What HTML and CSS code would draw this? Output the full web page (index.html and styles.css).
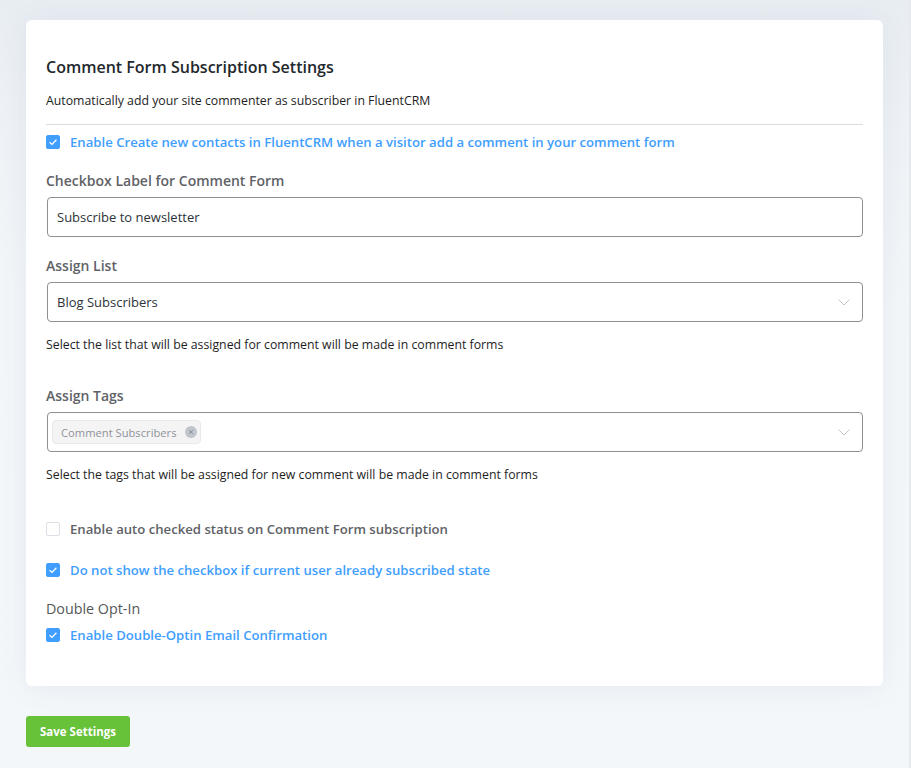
FILE: index.html
```html
<!DOCTYPE html>
<html>
<head>
<meta charset="utf-8">
<link rel="stylesheet" href="styles.css">
</head>
<body>
<div class="page">
  <div class="card">
    <h2 class="title">Comment Form Subscription Settings</h2>
    <p class="subtitle">Automatically add your site commenter as subscriber in FluentCRM</p>
    <hr class="divider">
    <label class="check checked first">
      <span class="box"><svg viewBox="0 0 14 14" width="14" height="14"><path d="M3.6 7.2 L6 9.4 L10.4 4.8" fill="none" stroke="#fff" stroke-width="1.3"/></svg></span>
      <span class="check-text">Enable Create new contacts in FluentCRM when a visitor add a comment in your comment form</span>
    </label>

    <div class="group">
      <div class="label">Checkbox Label for Comment Form</div>
      <div class="input">Subscribe to newsletter</div>
    </div>

    <div class="group">
      <div class="label">Assign List</div>
      <div class="input select">Blog Subscribers
        <svg class="chev" viewBox="0 0 12 7" width="12" height="7"><path d="M0.5 0.5 L6 6 L11.5 0.5" fill="none" stroke="#c0c4cc" stroke-width="1"/></svg>
      </div>
      <p class="help">Select the list that will be assigned for comment will be made in comment forms</p>
    </div>

    <div class="group tags-group">
      <div class="label">Assign Tags</div>
      <div class="input select tags">
        <span class="tag">Comment Subscribers<span class="tag-close"><svg viewBox="0 0 12 12" width="12" height="12"><circle cx="6" cy="6" r="6" fill="#c0c4cc"/><path d="M4 4 L8 8 M8 4 L4 8" stroke="#909399" stroke-width="1"/></svg></span></span>
        <svg class="chev" viewBox="0 0 12 7" width="12" height="7"><path d="M0.5 0.5 L6 6 L11.5 0.5" fill="none" stroke="#c0c4cc" stroke-width="1"/></svg>
      </div>
      <p class="help">Select the tags that will be assigned for new comment will be made in comment forms</p>
    </div>

    <label class="check auto">
      <span class="box empty"></span>
      <span class="check-text">Enable auto checked status on Comment Form subscription</span>
    </label>

    <label class="check checked hide">
      <span class="box"><svg viewBox="0 0 14 14" width="14" height="14"><path d="M3.6 7.2 L6 9.4 L10.4 4.8" fill="none" stroke="#fff" stroke-width="1.3"/></svg></span>
      <span class="check-text">Do not show the checkbox if current user already subscribed state</span>
    </label>

    <div class="label optin">Double Opt-In</div>
    <label class="check checked last">
      <span class="box"><svg viewBox="0 0 14 14" width="14" height="14"><path d="M3.6 7.2 L6 9.4 L10.4 4.8" fill="none" stroke="#fff" stroke-width="1.3"/></svg></span>
      <span class="check-text">Enable Double-Optin Email Confirmation</span>
    </label>
  </div>
  <button class="save">Save Settings</button>
</div>
</body>
</html>
```

FILE: styles.css
```css
* { box-sizing: border-box; }
html, body { margin: 0; padding: 0; }
body {
  background: #f3f6f9;
  font-family: "Open Sans", "Noto Sans", sans-serif;
  color: #1e1e1e;
  height: 768px;
  overflow: hidden;
}
.page {
  width: 911px;
  height: 768px;
  padding: 20px 26px 0 26px;
  background: linear-gradient(#e8edf2 0, #eef2f6 120px, #f3f6f9 300px, #f4f7fa 100%);
  border-right: 2px solid #e6e9ed;
}
.card {
  background: #fff;
  border-radius: 6px;
  padding: 35px 20px 41px;
  box-shadow: 0 2px 30px rgba(40, 70, 110, 0.07);
}
.title {
  margin: 0;
  font-size: 16px;
  font-weight: 600;
  line-height: 24px;
  color: #23282d;
}
.subtitle {
  margin: 12px 0 0;
  font-size: 12.3px;
  line-height: 20px;
  color: #1e1e1e;
}
.divider {
  margin: 13px 0 0;
  border: 0;
  border-top: 1px solid #dcdcde;
  height: 0;
}
.check {
  display: flex;
  align-items: center;
  height: 20px;
  font-size: 13.15px;
  font-weight: 600;
  color: #606266;
}
.check.checked { color: #409eff; }
.check.first { margin-top: 7px; }
.check.auto { margin-top: 34px; }
.check.hide { margin-top: 21px; }
.check.last { margin-top: 5px; }
.box {
  width: 14px;
  height: 14px;
  border-radius: 2px;
  background: #409eff;
  border: 1px solid #409eff;
  margin-right: 10px;
  display: flex;
  flex: none;
}
.box svg { margin: -1px; }
.box.empty {
  background: #fff;
  border-color: #dcdfe6;
}
.group { margin-top: 18px; }
.tags-group { margin-top: 30px; }
.label {
  font-size: 14px;
  font-weight: 600;
  line-height: 22px;
  color: #606266;
  margin-bottom: 5px;
}
.label.optin {
  margin-top: 18px;
  margin-bottom: 0;
  font-size: 14.3px;
  font-weight: 500;
  color: #555759;
}
.input {
  height: 40px;
  border: 1px solid #8c8f94;
  border-radius: 4px;
  padding: 0 9px;
  display: flex;
  align-items: center;
  font-size: 13px;
  color: #2c3338;
  position: relative;
  margin-left: 1px;
}
.select { justify-content: space-between; padding-right: 12px; }
.chev { flex: none; }
.tags { padding-left: 4px; }
.tag {
  display: inline-flex;
  align-items: center;
  height: 24px;
  padding: 0 3px 0 8px;
  background: #f4f4f5;
  border: 1px solid #e9e9eb;
  border-radius: 4px;
  color: #909399;
  font-size: 11.2px;
}
.tag-close { display: flex; margin-left: 8px; }
.help {
  margin: 13px 0 0;
  font-size: 12.3px;
  line-height: 20px;
  color: #1e1e1e;
}
.save {
  margin-top: 30px;
  width: 104px;
  height: 31px;
  border: 0;
  border-radius: 3px;
  background: #67c23a;
  color: #fff;
  font-family: "Open Sans", "Noto Sans", sans-serif;
  font-size: 11.5px;
  font-weight: 700;
  padding: 0;
}
```
